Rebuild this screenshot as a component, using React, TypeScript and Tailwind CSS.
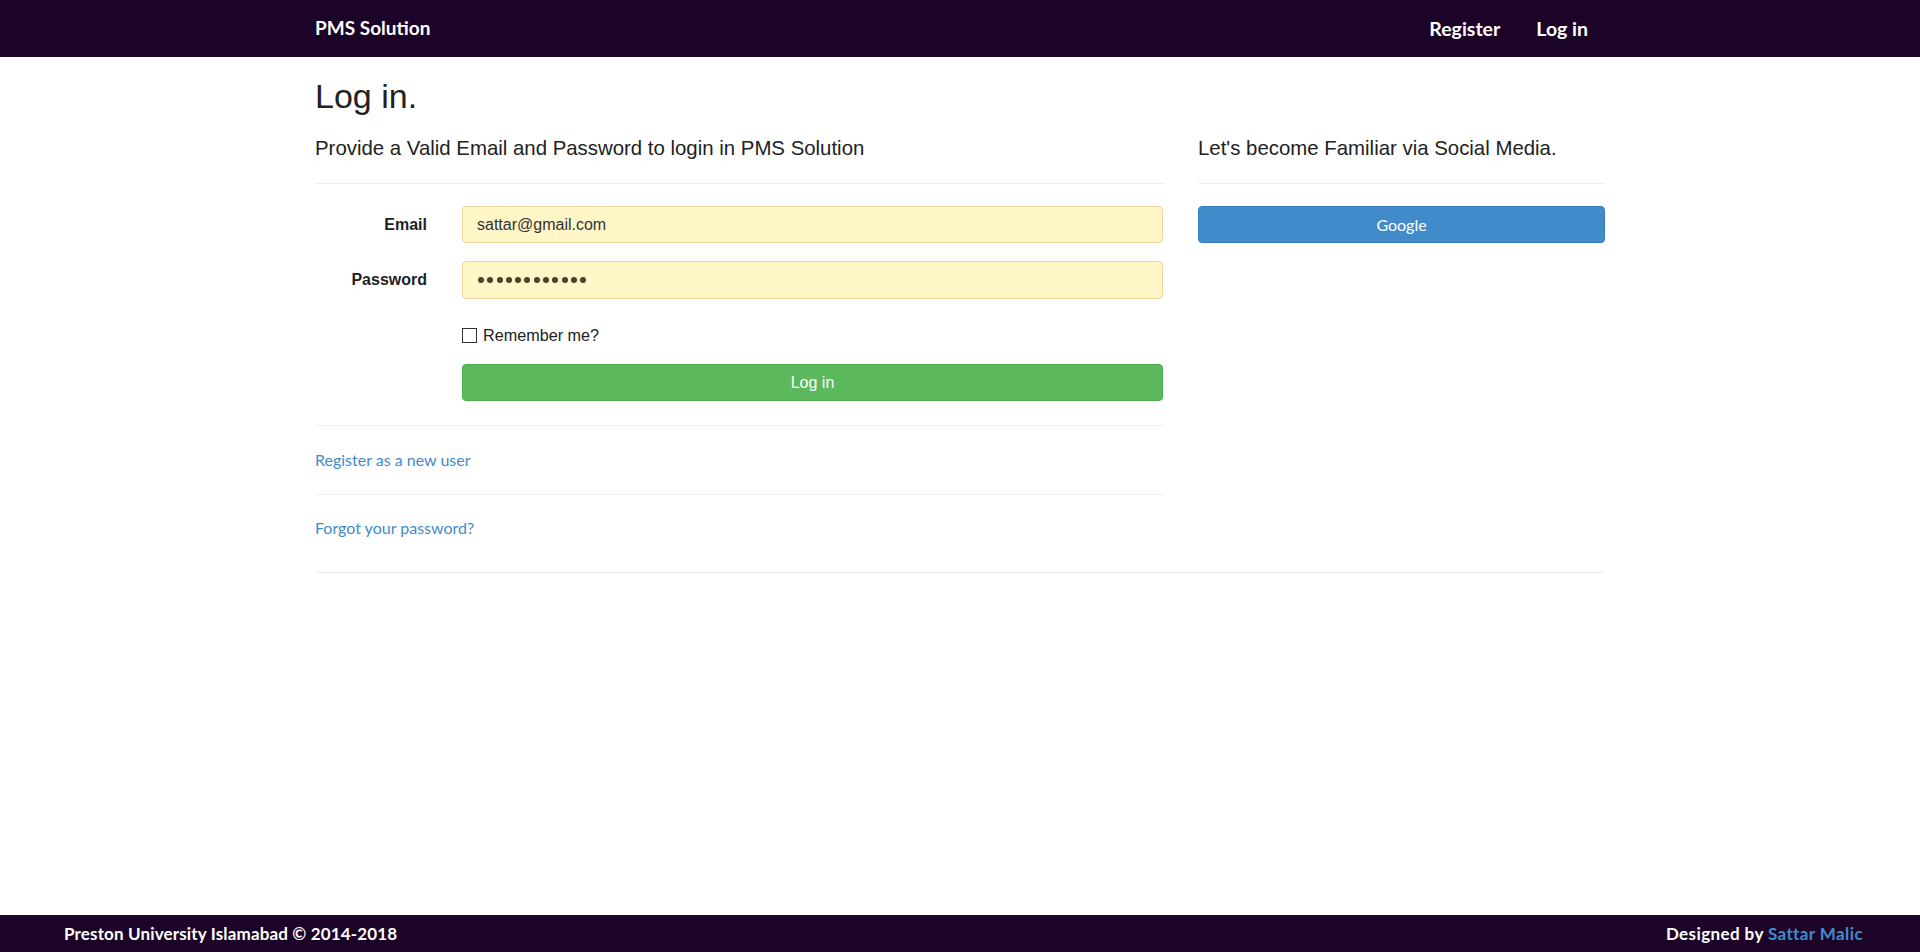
import { FC } from 'react';

const sans = "font-['Liberation_Sans',Arial,sans-serif]";
const humanist = "font-['Lato','Noto_Sans',sans-serif]";

const NavBar: FC = () => (
  <nav className="h-[57px] bg-[#1c0428]">
    <div className="mx-auto flex h-full w-[1320px] items-center justify-between px-[15px]">
      <a href="#" className={`${humanist} text-[19px] font-bold text-white`}>
        PMS Solution
      </a>
      <ul className={`${humanist} flex items-center gap-[36px] pr-[17px] text-[19.5px] font-bold text-white`}>
        <li><a href="#">Register</a></li>
        <li><a href="#">Log in</a></li>
      </ul>
    </div>
  </nav>
);

const Field: FC<{ label: string; children: React.ReactNode }> = ({ label, children }) => (
  <div className="flex items-center">
    <label className="w-[146px] pr-[19px] text-right text-[16px] font-bold text-[#222]">{label}</label>
    <div className="flex-1 pl-[16px] pr-[2px]">{children}</div>
  </div>
);

const LoginForm: FC = () => (
  <section className="w-[850px]">
    <h4 className="text-[20.4px] leading-[22px] text-[#222]">
      Provide a Valid Email and Password to login in PMS Solution
    </h4>
    <hr className="mt-[24px] border-[#eee]" />

    <form className="mt-[22px]" onSubmit={(e) => e.preventDefault()}>
      <div className="-ml-[15px]">
        <Field label="Email">
          <div className="flex h-[37px] items-center rounded-[4px] border border-[#e8d79e] bg-[#fff6c8] px-[14px] text-[16px] text-[#333]">
            sattar@gmail.com
          </div>
        </Field>
        <div className="mt-[18px]">
          <Field label="Password">
            <div className="flex h-[38px] items-center gap-[3.3px] rounded-[4px] border border-[#e8d79e] bg-[#fff6c8] px-[15px]">
              {Array.from({ length: 12 }).map((_, i) => (
                <span key={i} className="h-[6px] w-[6px] rounded-full bg-[#4b3f2c]" />
              ))}
            </div>
          </Field>
        </div>
      </div>

      <div className="ml-[147px] mt-[26px] flex items-center gap-[6px] text-[16.2px] leading-[20px] text-[#222]">
        <span className="h-[15px] w-[15px] border border-[#333] bg-white" />
        Remember me?
      </div>

      <button
        type="submit"
        className="ml-[147px] mt-[19px] h-[37px] w-[701px] rounded-[4px] border border-[#4cae4c] bg-[#5cb85c] text-[16px] text-white"
      >
        Log in
      </button>
    </form>

    <hr className="mt-[24px] border-[#eee]" />
    <p className={`${humanist} mt-[24px] text-[16px] leading-[20px]`}>
      <a href="#" className="text-[#428bca]">Register as a new user</a>
    </p>
    <hr className="mt-[24px] border-[#eee]" />
    <p className={`${humanist} mt-[23px] text-[16px] leading-[20px]`}>
      <a href="#" className="text-[#428bca]">Forgot your password?</a>
    </p>
  </section>
);

const SocialLogin: FC = () => (
  <section className="w-[407px]">
    <h4 className="text-[20.4px] leading-[22px] text-[#222]">Let's become Familiar via Social Media.</h4>
    <hr className="mt-[24px] border-[#eee]" />
    <button
      type="button"
      className={`${humanist} mt-[22px] h-[37px] w-full rounded-[4px] border border-[#357ebd] bg-[#428bca] text-[16px] text-white`}
    >
      Google
    </button>
  </section>
);

const Footer: FC = () => (
  <footer className={`${humanist} flex h-[37px] items-center justify-between bg-[#1c0428] pl-[64px] pr-[57px] text-[17px] font-bold text-white`}>
    <p className="tracking-[0.15px]">Preston University Islamabad © 2014-2018</p>
    <p className="tracking-[0.4px]">
      Designed by <a href="#" className="text-[#428bca]">Sattar Malic</a>
    </p>
  </footer>
);

const App: FC = () => (
  <div className={`${sans} flex min-h-screen flex-col bg-white`}>
    <NavBar />
    <main className="flex-1">
      <div className="mx-auto w-[1320px] px-[15px]">
        <h2 className="mt-[20px] text-[34px] leading-[38px] text-[#222]">Log in.</h2>
        <div className="mt-[22px] flex justify-between">
          <LoginForm />
          <SocialLogin />
        </div>
        <hr className="mt-[34px] border-[#eee]" />
      </div>
    </main>
    <Footer />
  </div>
);

export default App;
